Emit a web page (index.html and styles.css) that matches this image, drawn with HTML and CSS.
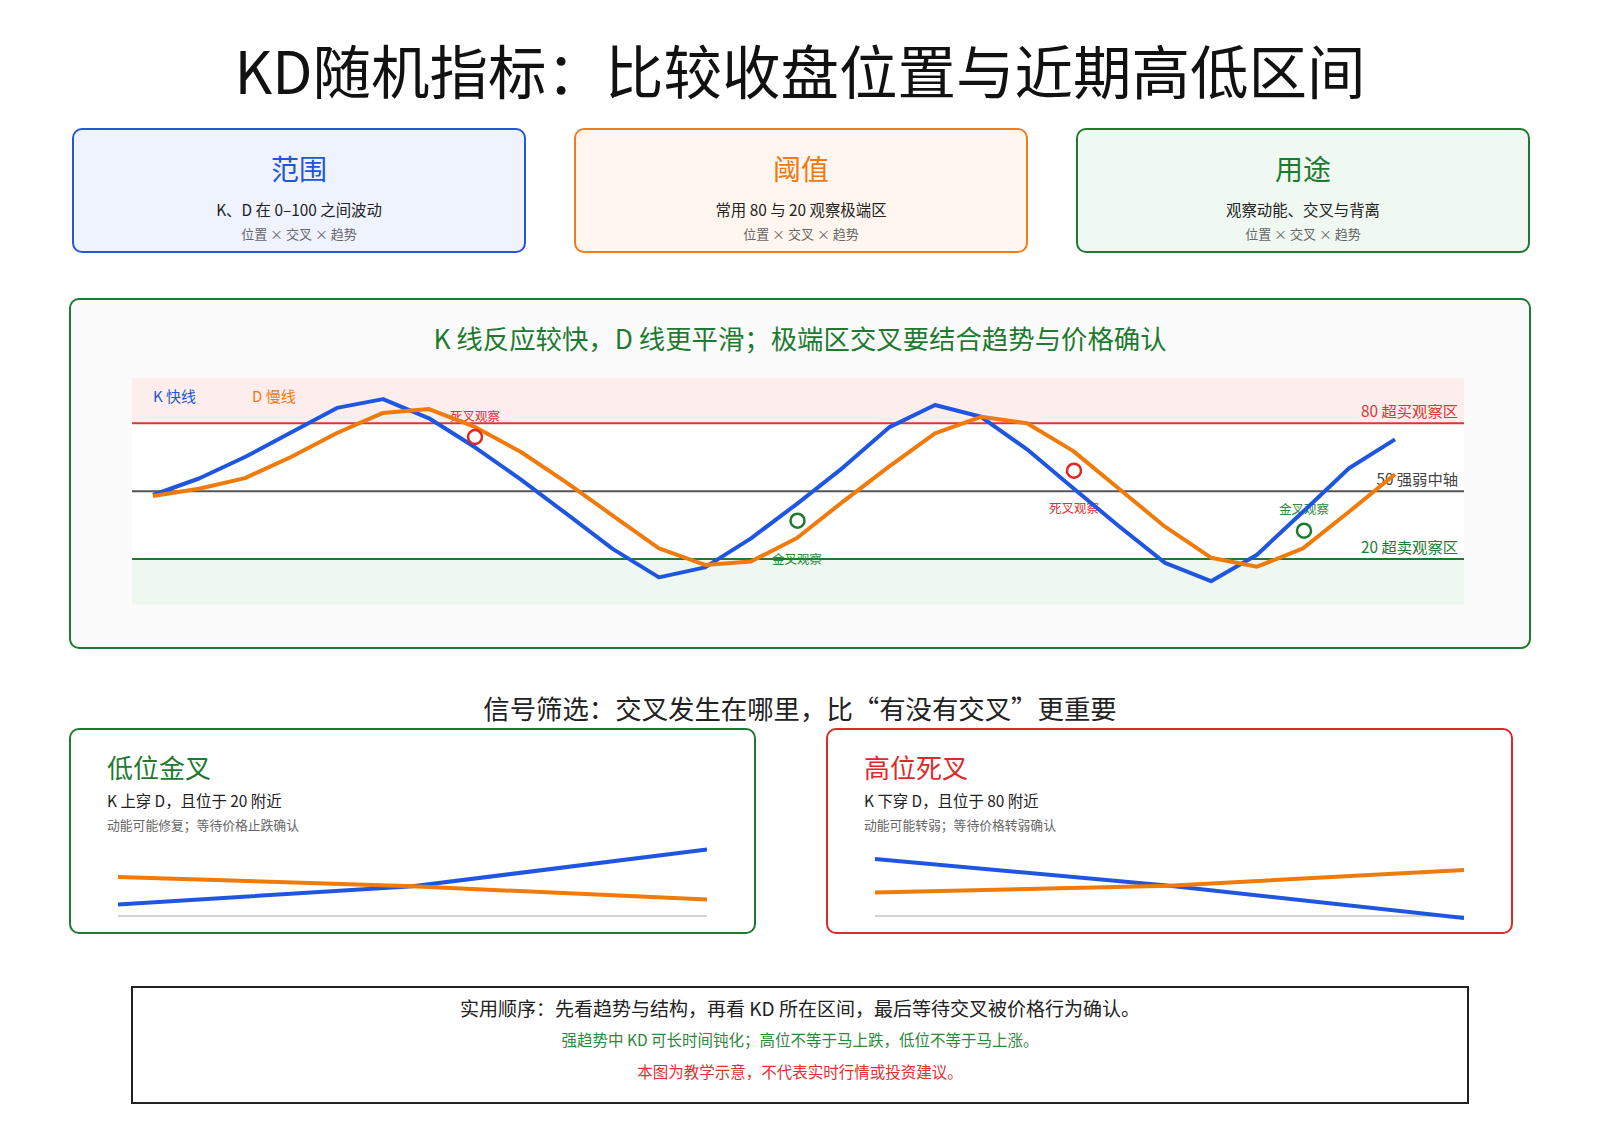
FILE: index.html
```html
<!DOCTYPE html>
<html lang="zh-CN">
<head>
<meta charset="utf-8">
<title>KD随机指标</title>
<link rel="stylesheet" href="styles.css">
</head>
<body>
<h1 class="title">KD随机指标：比较收盘位置与近期高低区间</h1>

<section class="cards">
  <div class="card card-blue">
    <div class="card-head">范围</div>
    <div class="card-text">K、D 在 0–100 之间波动</div>
    <div class="card-note">位置 × 交叉 × 趋势</div>
  </div>
  <div class="card card-orange">
    <div class="card-head">阈值</div>
    <div class="card-text">常用 80 与 20 观察极端区</div>
    <div class="card-note">位置 × 交叉 × 趋势</div>
  </div>
  <div class="card card-green">
    <div class="card-head">用途</div>
    <div class="card-text">观察动能、交叉与背离</div>
    <div class="card-note">位置 × 交叉 × 趋势</div>
  </div>
</section>

<section class="chart-panel">
  <div class="chart-head">K 线反应较快，D 线更平滑；极端区交叉要结合趋势与价格确认</div>
  <svg class="chart" width="1458" height="250" viewBox="71 370 1458 250">
    <rect x="132" y="378" width="1332" height="226.5" fill="#ffffff"/>
    <rect x="132" y="378" width="1332" height="45.3" fill="#fdeded"/>
    <rect x="132" y="559" width="1332" height="45.5" fill="#eef8f0"/>
    <line x1="132" y1="423.3" x2="1464" y2="423.3" stroke="#d93636" stroke-width="2"/>
    <line x1="132" y1="491.3" x2="1464" y2="491.3" stroke="#555555" stroke-width="2"/>
    <line x1="132" y1="559" x2="1464" y2="559" stroke="#1e7a30" stroke-width="2"/>

    <g font-family="Noto Sans CJK SC, sans-serif" dominant-baseline="central">
      <text x="153" y="395.5" font-size="15" fill="#2156d6">K 快线</text>
      <text x="252" y="395.5" font-size="15" fill="#f07a10">D 慢线</text>
      <text x="1458" y="409.5" font-size="15.3" fill="#d93636" text-anchor="end">80 超买观察区</text>
      <text x="1458" y="477.5" font-size="15.3" fill="#444444" text-anchor="end">50 强弱中轴</text>
      <text x="1458" y="545.5" font-size="15.3" fill="#1e7a30" text-anchor="end">20 超卖观察区</text>
      <text x="475" y="415" font-size="12.5" fill="#e03030" text-anchor="middle">死叉观察</text>
      <text x="1074" y="507.5" font-size="12.5" fill="#e03030" text-anchor="middle">死叉观察</text>
      <text x="797" y="558" font-size="12.5" fill="#2a8a3a" text-anchor="middle">金叉观察</text>
      <text x="1304" y="508" font-size="12.5" fill="#2a8a3a" text-anchor="middle">金叉观察</text>
    </g>

    <polyline fill="none" stroke="#1f56e0" stroke-width="4" stroke-linejoin="round"
      points="153,495.0 199,478.5 245,457.0 291,432.6 337,407.9 383,399.1 429,418.3 475,447.3 521,479.6 567,514.2 613,549.1 659,577.4 705,567.4 751,538.4 797,503.8 843,467.6 889,427.4 935,405.0 981,416.8 1027,449.3 1073,488.0 1119,526.2 1165,562.9 1211,581.2 1257,554.7 1303,511.8 1349,468.3 1395,439.4"/>
    <polyline fill="none" stroke="#f07a0a" stroke-width="4" stroke-linejoin="round"
      points="153,495.9 199,488.7 245,478.1 291,457.0 337,433.0 383,412.9 429,409.1 475,426.9 521,452.0 567,482.8 613,515.8 659,548.4 705,564.9 751,561.5 797,538.0 843,501.6 889,466.7 935,433.3 981,416.8 1027,423.3 1073,450.9 1119,488.7 1165,526.7 1211,557.7 1257,566.7 1303,548.4 1349,511.8 1395,474.2"/>

    <circle cx="475" cy="437" r="7" fill="none" stroke="#e02828" stroke-width="2.5"/>
    <circle cx="1074" cy="470.7" r="7" fill="none" stroke="#e02828" stroke-width="2.5"/>
    <circle cx="797.5" cy="520.7" r="7" fill="none" stroke="#1e7a30" stroke-width="2.5"/>
    <circle cx="1304" cy="530.7" r="7" fill="none" stroke="#1e7a30" stroke-width="2.5"/>
  </svg>
</section>

<h2 class="section-title">信号筛选：交叉发生在哪里，比“有没有交叉”更重要</h2>

<section class="signals">
  <div class="signal signal-green">
    <div class="signal-head">低位金叉</div>
    <div class="signal-text">K 上穿 D，且位于 20 附近</div>
    <div class="signal-note">动能可能修复；等待价格止跌确认</div>
    <svg class="mini" width="589" height="80" viewBox="0 0 589 80">
      <line x1="0" y1="74" x2="589" y2="74" stroke="#d4d4d4" stroke-width="2"/>
      <polyline points="0,62.5 294.5,44.3 589,7.5" fill="none" stroke="#1f56e0" stroke-width="4" stroke-linejoin="round"/>
      <polyline points="0,35 294.5,44.3 589,57.5" fill="none" stroke="#f07a0a" stroke-width="4" stroke-linejoin="round"/>
    </svg>
  </div>
  <div class="signal signal-red">
    <div class="signal-head">高位死叉</div>
    <div class="signal-text">K 下穿 D，且位于 80 附近</div>
    <div class="signal-note">动能可能转弱；等待价格转弱确认</div>
    <svg class="mini" width="589" height="80" viewBox="0 0 589 80">
      <line x1="0" y1="74" x2="589" y2="74" stroke="#d4d4d4" stroke-width="2"/>
      <polyline points="0,17 294.5,43.7 589,76" fill="none" stroke="#1f56e0" stroke-width="4" stroke-linejoin="round"/>
      <polyline points="0,50.5 294.5,43.7 589,28" fill="none" stroke="#f07a0a" stroke-width="4" stroke-linejoin="round"/>
    </svg>
  </div>
</section>

<section class="footer-box">
  <div class="foot-main">实用顺序：先看趋势与结构，再看 KD 所在区间，最后等待交叉被价格行为确认。</div>
  <div class="foot-green">强趋势中 KD 可长时间钝化；高位不等于马上跌，低位不等于马上涨。</div>
  <div class="foot-red">本图为教学示意，不代表实时行情或投资建议。</div>
</section>
</body>
</html>
```

FILE: styles.css
```css
html, body {
  margin: 0;
  padding: 0;
  background: #ffffff;
}

body {
  width: 1600px;
  font-family: "Noto Sans CJK SC", "Noto Sans", sans-serif;
  color: #222222;
  padding-top: 34px;
}

.title {
  margin: 0;
  font-size: 58.5px;
  line-height: 70px;
  font-weight: 400;
  text-align: center;
  color: #111111;
}

.cards {
  display: grid;
  grid-template-columns: repeat(3, 454px);
  gap: 48px;
  margin: 24px 0 0 72px;
}

.card {
  box-sizing: border-box;
  height: 125px;
  border: 2px solid;
  border-radius: 10px;
  padding-top: 21px;
  text-align: center;
}

.card-blue { border-color: #2456d6; background: #eef3fe; }
.card-orange { border-color: #f07c1c; background: #fff7ef; }
.card-green { border-color: #1e7a30; background: #eff8f1; }

.card-head {
  font-size: 28px;
  line-height: 34px;
}
.card-blue .card-head { color: #2156d6; }
.card-orange .card-head { color: #f07a10; }
.card-green .card-head { color: #1e7a30; }

.card-text {
  margin-top: 14px;
  font-size: 15.4px;
  line-height: 20px;
  color: #222222;
}

.card-note {
  margin-top: 6px;
  font-size: 13px;
  line-height: 18px;
  color: #666666;
}

.chart-panel {
  box-sizing: border-box;
  width: 1462px;
  height: 351px;
  margin: 45px 0 0 69px;
  border: 2px solid #1e7a30;
  border-radius: 10px;
  background: #fbfbfb;
  padding-top: 22px;
}

.chart-head {
  font-size: 26.4px;
  line-height: 32px;
  text-align: center;
  color: #1e7a30;
}

.chart {
  display: block;
  margin-top: 16px;
}

.section-title {
  margin: 43px 0 0 0;
  font-size: 26.4px;
  line-height: 32px;
  font-weight: 400;
  text-align: center;
  color: #222222;
}

.signals {
  display: grid;
  grid-template-columns: 687px 687px;
  gap: 70px;
  margin: 4px 0 0 69px;
}

.signal {
  box-sizing: border-box;
  height: 206px;
  border: 2px solid;
  border-radius: 10px;
  background: #ffffff;
  padding: 21px 0 0 36px;
}

.signal-green { border-color: #1e7a30; }
.signal-red { border-color: #e02828; }

.signal-head {
  font-size: 26px;
  line-height: 32px;
}
.signal-green .signal-head { color: #1e7a30; }
.signal-red .signal-head { color: #e02828; }

.signal-text {
  margin-top: 7px;
  font-size: 15.4px;
  line-height: 20px;
  color: #222222;
}

.signal-note {
  margin-top: 6px;
  font-size: 12.8px;
  line-height: 18px;
  color: #666666;
}

.mini {
  display: block;
  margin: 8px 0 0 11px;
}

.footer-box {
  box-sizing: border-box;
  width: 1338px;
  height: 118px;
  margin: 52px 0 0 131px;
  border: 2px solid #222222;
  padding-top: 8px;
  text-align: center;
}

.foot-main {
  font-size: 19px;
  line-height: 24px;
  color: #222222;
}

.foot-green {
  margin-top: 9px;
  font-size: 15.5px;
  line-height: 20px;
  color: #2a8a3a;
}

.foot-red {
  margin-top: 12px;
  font-size: 15.5px;
  line-height: 20px;
  color: #e03030;
}
```
